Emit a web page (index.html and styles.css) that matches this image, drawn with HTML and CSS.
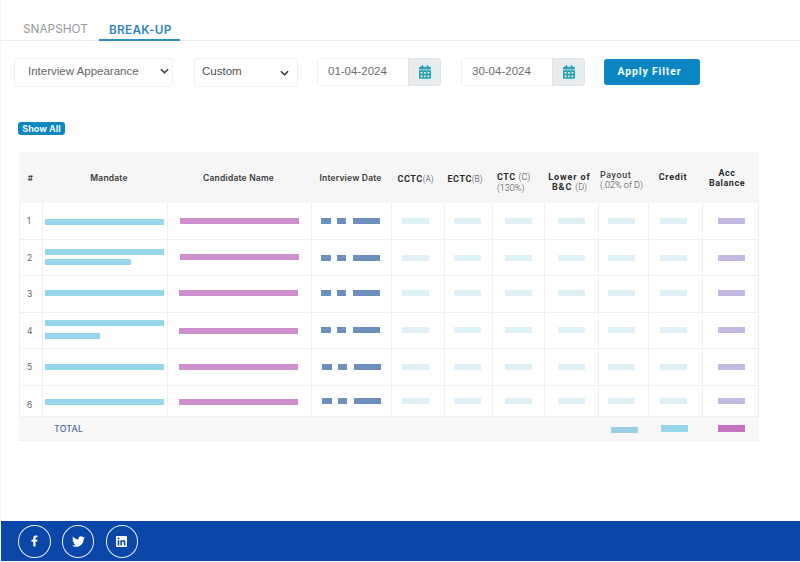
FILE: index.html
```html
<!DOCTYPE html>
<html lang="en">
<head>
<meta charset="utf-8">
<title>Break-up</title>
<link rel="stylesheet" href="styles.css">
</head>
<body>
<div class="page">
  <nav class="tabs">
    <span class="tab">SNAPSHOT</span>
    <span class="tab active">BREAK-UP</span>
  </nav>
  <div class="filters">
    <div class="select sel-type"><span>Interview Appearance</span><svg class="chev" viewBox="0 0 10 6"><path d="M1 1l4 4 4-4" fill="none" stroke="#333" stroke-width="1.6"/></svg></div>
    <div class="select sel-range"><span>Custom</span><svg class="chev" viewBox="0 0 10 6"><path d="M1 1l4 4 4-4" fill="none" stroke="#333" stroke-width="1.6"/></svg></div>
    <div class="date"><span class="date-val">01-04-2024</span><span class="addon"><svg class="cal" viewBox="0 0 448 512"><path d="M0 464c0 26.5 21.5 48 48 48h352c26.5 0 48-21.5 48-48V192H0v272zm320-196c0-6.6 5.4-12 12-12h40c6.6 0 12 5.4 12 12v40c0 6.6-5.4 12-12 12h-40c-6.6 0-12-5.4-12-12v-40zm0 128c0-6.6 5.4-12 12-12h40c6.6 0 12 5.4 12 12v40c0 6.6-5.4 12-12 12h-40c-6.6 0-12-5.4-12-12v-40zM192 268c0-6.6 5.4-12 12-12h40c6.6 0 12 5.4 12 12v40c0 6.6-5.4 12-12 12h-40c-6.6 0-12-5.4-12-12v-40zm0 128c0-6.6 5.4-12 12-12h40c6.6 0 12 5.4 12 12v40c0 6.6-5.4 12-12 12h-40c-6.6 0-12-5.4-12-12v-40zM64 268c0-6.6 5.4-12 12-12h40c6.6 0 12 5.4 12 12v40c0 6.6-5.4 12-12 12H76c-6.6 0-12-5.4-12-12v-40zm0 128c0-6.6 5.4-12 12-12h40c6.6 0 12 5.4 12 12v40c0 6.6-5.4 12-12 12H76c-6.6 0-12-5.4-12-12v-40zM400 64h-48V16c0-8.8-7.2-16-16-16h-32c-8.8 0-16 7.2-16 16v48H160V16c0-8.8-7.2-16-16-16h-32c-8.8 0-16 7.2-16 16v48H48C21.5 64 0 85.5 0 112v48h448v-48c0-26.5-21.5-48-48-48z"/></svg></span></div>
    <div class="date"><span class="date-val">30-04-2024</span><span class="addon"><svg class="cal" viewBox="0 0 448 512"><path d="M0 464c0 26.5 21.5 48 48 48h352c26.5 0 48-21.5 48-48V192H0v272zm320-196c0-6.6 5.4-12 12-12h40c6.6 0 12 5.4 12 12v40c0 6.6-5.4 12-12 12h-40c-6.6 0-12-5.4-12-12v-40zm0 128c0-6.6 5.4-12 12-12h40c6.6 0 12 5.4 12 12v40c0 6.6-5.4 12-12 12h-40c-6.6 0-12-5.4-12-12v-40zM192 268c0-6.6 5.4-12 12-12h40c6.6 0 12 5.4 12 12v40c0 6.6-5.4 12-12 12h-40c-6.6 0-12-5.4-12-12v-40zm0 128c0-6.6 5.4-12 12-12h40c6.6 0 12 5.4 12 12v40c0 6.6-5.4 12-12 12h-40c-6.6 0-12-5.4-12-12v-40zM64 268c0-6.6 5.4-12 12-12h40c6.6 0 12 5.4 12 12v40c0 6.6-5.4 12-12 12H76c-6.6 0-12-5.4-12-12v-40zm0 128c0-6.6 5.4-12 12-12h40c6.6 0 12 5.4 12 12v40c0 6.6-5.4 12-12 12H76c-6.6 0-12-5.4-12-12v-40zM400 64h-48V16c0-8.8-7.2-16-16-16h-32c-8.8 0-16 7.2-16 16v48H160V16c0-8.8-7.2-16-16-16h-32c-8.8 0-16 7.2-16 16v48H48C21.5 64 0 85.5 0 112v48h448v-48c0-26.5-21.5-48-48-48z"/></svg></span></div>
    <button class="apply">Apply Filter</button>
  </div>
  <div class="show-row"><span class="show-all">Show All</span></div>
  <table class="grid">
    <thead>
      <tr>
        <th class="h-m c-num">#</th>
        <th class="h-m c-mandate">Mandate</th>
        <th class="h-m c-cand">Candidate Name</th>
        <th class="h-m c-date">Interview Date</th>
        <th class="c-a">CCTC<i>(A)</i></th>
        <th class="c-b">ECTC<i>(B)</i></th>
        <th class="c-c h-left"><span class="ln">CTC <i>(C)</i></span><span class="ln"><i>(130%)</i></span></th>
        <th class="c-d"><span class="ln">Lower of</span><span class="ln">B&amp;C <i>(D)</i></span></th>
        <th class="c-e h-left"><span class="ln pay">Payout</span><span class="ln"><i>(.02% of D)</i></span></th>
        <th class="c-f">Credit</th>
        <th class="c-g"><span class="ln">Acc</span><span class="ln">Balance</span></th>
      </tr>
    </thead>
    <tbody>
      <tr class="r1">
        <td class="num">1</td>
        <td class="mandate"><span class="bar m-full"></span></td>
        <td class="cand"><span class="bar pink"></span></td>
        <td class="dt"><span class="d1"></span><span class="d2"></span><span class="d3"></span></td>
        <td><span class="bar pale"></span></td><td><span class="bar pale"></span></td><td><span class="bar pale"></span></td><td><span class="bar pale"></span></td><td><span class="bar pale"></span></td><td><span class="bar pale"></span></td><td><span class="bar lilac"></span></td>
      </tr>
      <tr class="r2">
        <td class="num">2</td>
        <td class="mandate"><span class="bar m-full"></span><span class="bar m-mid"></span></td>
        <td class="cand"><span class="bar pink"></span></td>
        <td class="dt"><span class="d1"></span><span class="d2"></span><span class="d3"></span></td>
        <td><span class="bar pale"></span></td><td><span class="bar pale"></span></td><td><span class="bar pale"></span></td><td><span class="bar pale"></span></td><td><span class="bar pale"></span></td><td><span class="bar pale"></span></td><td><span class="bar lilac"></span></td>
      </tr>
      <tr class="r3">
        <td class="num">3</td>
        <td class="mandate"><span class="bar m-full"></span></td>
        <td class="cand"><span class="bar pink"></span></td>
        <td class="dt"><span class="d1"></span><span class="d2"></span><span class="d3"></span></td>
        <td><span class="bar pale"></span></td><td><span class="bar pale"></span></td><td><span class="bar pale"></span></td><td><span class="bar pale"></span></td><td><span class="bar pale"></span></td><td><span class="bar pale"></span></td><td><span class="bar lilac"></span></td>
      </tr>
      <tr class="r4">
        <td class="num">4</td>
        <td class="mandate"><span class="bar m-full"></span><span class="bar m-short"></span></td>
        <td class="cand"><span class="bar pink"></span></td>
        <td class="dt"><span class="d1"></span><span class="d2"></span><span class="d3"></span></td>
        <td><span class="bar pale"></span></td><td><span class="bar pale"></span></td><td><span class="bar pale"></span></td><td><span class="bar pale"></span></td><td><span class="bar pale"></span></td><td><span class="bar pale"></span></td><td><span class="bar lilac"></span></td>
      </tr>
      <tr class="r5">
        <td class="num">5</td>
        <td class="mandate"><span class="bar m-full"></span></td>
        <td class="cand"><span class="bar pink"></span></td>
        <td class="dt"><span class="d1"></span><span class="d2"></span><span class="d3"></span></td>
        <td><span class="bar pale"></span></td><td><span class="bar pale"></span></td><td><span class="bar pale"></span></td><td><span class="bar pale"></span></td><td><span class="bar pale"></span></td><td><span class="bar pale"></span></td><td><span class="bar lilac"></span></td>
      </tr>
      <tr class="r6">
        <td class="num">6</td>
        <td class="mandate"><span class="bar m-full"></span></td>
        <td class="cand"><span class="bar pink"></span></td>
        <td class="dt"><span class="d1"></span><span class="d2"></span><span class="d3"></span></td>
        <td><span class="bar pale"></span></td><td><span class="bar pale"></span></td><td><span class="bar pale"></span></td><td><span class="bar pale"></span></td><td><span class="bar pale"></span></td><td><span class="bar pale"></span></td><td><span class="bar lilac"></span></td>
      </tr>
    </tbody>
    <tfoot>
      <tr>
        <td class="total" colspan="8">TOTAL</td>
        <td><span class="bar tot-pay"></span></td>
        <td><span class="bar tot-credit"></span></td>
        <td><span class="bar tot-acc"></span></td>
      </tr>
    </tfoot>
  </table>
  <footer class="foot">
    <a class="social"><svg class="ic-f" viewBox="0 0 320 512"><path d="M279.14 288l14.22-92.66h-88.91v-60.13c0-25.35 12.42-50.06 52.24-50.06h40.42V6.26S260.43 0 225.36 0c-73.22 0-121.08 44.38-121.08 124.72v70.62H22.89V288h81.39v224h100.17V288z"/></svg></a>
    <a class="social"><svg class="ic-t" viewBox="0 0 512 512"><path d="M459.37 151.716c.325 4.548.325 9.097.325 13.645 0 138.72-105.583 298.558-298.558 298.558-59.452 0-114.68-17.219-161.137-47.106 8.447.974 16.568 1.299 25.34 1.299 49.055 0 94.213-16.568 130.274-44.832-46.132-.975-84.792-31.188-98.112-72.772 6.498.974 12.995 1.624 19.818 1.624 9.421 0 18.843-1.3 27.614-3.573-48.081-9.747-84.143-51.98-84.143-102.985v-1.299c13.969 7.797 30.214 12.67 47.431 13.319-28.264-18.843-46.781-51.005-46.781-87.391 0-19.492 5.197-37.36 14.294-52.954 51.655 63.675 129.3 105.258 216.365 109.807-1.624-7.797-2.599-15.918-2.599-24.04 0-57.828 46.782-104.934 104.934-104.934 30.213 0 57.502 12.67 76.67 33.137 23.715-4.548 46.456-13.32 66.599-25.34-7.798 24.366-24.366 44.833-46.132 57.827 21.117-2.273 41.584-8.122 60.426-16.243-14.292 20.791-32.161 39.308-52.628 54.253z"/></svg></a>
    <a class="social"><svg class="ic-l" viewBox="0 0 448 512"><path d="M416 32H31.9C14.3 32 0 46.5 0 64.3v383.4C0 465.5 14.3 480 31.9 480H416c17.6 0 32-14.5 32-32.3V64.3c0-17.8-14.4-32.3-32-32.3zM135.4 416H69V202.2h66.5V416zm-33.2-243c-21.3 0-38.5-17.3-38.5-38.5S80.9 96 102.2 96c21.2 0 38.5 17.3 38.5 38.5 0 21.3-17.2 38.5-38.5 38.5zm282.1 243h-66.4V312c0-24.8-.5-56.7-34.5-56.7-34.6 0-39.9 27-39.9 54.9V416h-66.4V202.2h63.7v29.2h.9c8.9-16.8 30.6-34.5 62.9-34.5 67.2 0 79.7 44.3 79.7 101.9V416z"/></svg></a>
  </footer>
</div>
</body>
</html>
```

FILE: styles.css
```css
* { box-sizing: border-box; }
html, body { margin: 0; padding: 0; background: #fff; }
body { font-family: "Liberation Sans", Arial, sans-serif; }

.page {
  width: 800px;
  height: 561px;
  display: flex;
  flex-direction: column;
  border-left: 1px solid #f4f4f4;
}

/* tabs */
.tabs {
  height: 41px;
  display: flex;
  align-items: flex-end;
  padding-left: 21px;
  gap: 11px;
  border-bottom: 1px solid #ececec;
  flex: none;
}
.tab {
  font-family: Inter, sans-serif;
  font-size: 11.8px;
  line-height: 14px;
  color: #9a9a9a;
  height: 20px;
  padding-top: 2px;
  margin-left: 1px;
}
.tab.active {
  width: 81px;
  margin-left: 0;
  padding-left: 2px;
  text-align: center;
  color: #2a86bd;
  font-weight: 600;
  font-size: 11.8px;
  letter-spacing: .3px;
  border-bottom: 2px solid #2a8fc4;
  height: 20px;
  margin-bottom: -1px;
}

/* filters */
.filters {
  display: flex;
  align-items: flex-start;
  padding: 17px 0 0 13px;
  height: 81px;
  flex: none;
}
.select {
  height: 29px;
  border: 1px solid #f0f0f0;
  border-radius: 3px;
  display: flex;
  align-items: center;
  justify-content: space-between;
  font-size: 11.5px;
  color: #4e4e4e;
}
.sel-type { width: 159px; padding: 0 3px 4px 13px; margin-right: 21px; color: #666; }
.sel-range { width: 104px; padding: 0 8px 3px 7px; margin-right: 19px; }
.sel-range .chev { margin-top: 3px; }
.chev { width: 9px; height: 6px; display: block; }
.date {
  width: 124px;
  height: 28px;
  border: 1px solid #f0f0f0;
  border-radius: 3px;
  display: flex;
  margin-right: 20px;
}
.date-val {
  flex: 1;
  font-size: 11.5px;
  line-height: 24px;
  padding-left: 10px;
  color: #6c6c6c;
}
.addon {
  width: 33px;
  background: #e9ecef;
  border-radius: 0 3px 3px 0;
  display: flex;
  align-items: center;
  justify-content: center;
  margin: -1px -1px -1px 0;
  border: 1px solid #e2e5e8;
}
.cal { width: 12px; height: 14px; fill: #2aa3b3; display: block; }
.apply {
  width: 96px;
  height: 26px;
  margin: 1px 0 0 -1px;
  border: 0;
  border-radius: 3px;
  background: #0a87c2;
  color: #f2fafd;
  font-family: Roboto, sans-serif;
  font-size: 10.5px;
  font-weight: 700;
  letter-spacing: .85px;
  padding: 0 5px 2px 0;
}

/* show all */
.show-row { height: 30px; padding-left: 17px; flex: none; }
.show-all {
  display: block;
  width: 47px;
  height: 13px;
  border-radius: 3px;
  background: #0a87c2;
  color: #eef8fc;
  font-family: Inter, sans-serif;
  font-size: 9px;
  font-weight: 700;
  line-height: 13px;
  text-align: center;
}

/* table */
.grid {
  margin-left: 18px;
  width: 739px;
  table-layout: fixed;
  border-collapse: collapse;
  flex: none;
}
.grid th, .grid td {
  border: 1px solid #efefef;
  padding: 0;
  vertical-align: middle;
}
.grid thead tr { height: 50px; }
.grid th {
  background: #f6f6f6;
  border-color: #f6f6f6;
  font-family: Roboto, sans-serif;
  font-size: 9px;
  font-weight: 700;
  line-height: 10px;
  color: #2c2c2c;
  letter-spacing: .55px;
  text-align: center;
}
.grid th i {
  font-style: normal;
  font-weight: 300;
  letter-spacing: 0;
  color: #444;
}
.ln { display: block; white-space: nowrap; }
.grid th.h-m {
  font-family: Inter, sans-serif;
  font-size: 8.5px;
  font-weight: 600;
  letter-spacing: .2px;
  color: #3a3a3a;
}
.grid th.c-num { font-size: 8px; padding-right: 1px; }
.grid th.c-mandate { padding-left: 8px; }
.grid th.c-cand { padding-right: 2px; }
.grid th.c-date { padding-right: 2px; }
.grid th.h-left { text-align: left; }
.grid th.c-a { padding: 2px 5px 0 0; }
.grid th.c-b { padding: 2px 7px 0 0; }
.grid th.c-a i, .grid th.c-b i { font-size: 8.5px; }
.grid th.c-c { padding: 10px 0 0 4px; line-height: 10.5px; }
.grid th.c-d { padding: 8px 4px 0 0; letter-spacing: .9px; }
.grid th.c-d i { color: #555; }
.grid th.c-e { padding: 4px 0 0 1px; }
.grid th.c-f { padding: 0 5px 2px 0; letter-spacing: .7px; }
.grid th.c-g { padding: 0 7px 0 0; }
.pay { font-weight: 500; color: #444; }
.c-num { width: 23px; }
.c-mandate { width: 125px; }
.c-cand { width: 144px; }
.c-date { width: 80px; }
.c-a { width: 53px; }
.c-b { width: 48px; }
.c-c { width: 52px; }
.c-d { width: 54px; }
.c-e { width: 50px; }
.c-f { width: 54px; }
.c-g { width: 56px; }

.r1 { height: 37px; }
.r2 { height: 36px; }
.r3 { height: 37px; }
.r4 { height: 36px; }
.r5 { height: 37px; }
.r6 { height: 31px; }

/* row-level nudges: the bars sit slightly off the row's centre line */
.grid .r1 .mandate { padding-top: 2px; }
.grid .r2 .mandate, .grid .r2 .cand { padding-bottom: 2px; }
.grid .r3 td:not(.num) { padding-bottom: 2px; }
.grid .r3 .cand { padding-bottom: 4px; }
.grid .r4 td:not(.num):not(.cand) { padding-bottom: 2px; }
.grid .r6 .mandate, .grid .r6 .cand { padding-top: 2px; }

.grid .num {
  font-family: Inter, sans-serif;
  font-size: 8.5px;
  color: #666;
  padding-left: 7px;
}
.grid .r6 .num { padding-top: 7px; }
.bar { display: block; height: 6px; width: 27px; }
.grid .mandate { padding-left: 2px; }
.m-full { width: 119px; height: 6px; background: #98d7ea; }
.m-mid { width: 86px; height: 6px; background: #98d7ea; margin-top: 4px; }
.m-short { width: 55px; height: 6px; background: #98d7ea; margin-top: 7px; }
.grid .cand { padding-left: 12px; }
.pink { width: 119px; background: #cd90cc; }
.r3 .pink, .r4 .pink, .r5 .pink, .r6 .pink { margin-left: -1px; }
.grid .dt { padding-left: 9px; font-size: 0; white-space: nowrap; }
.grid .r5 .dt, .grid .r6 .dt { padding-left: 10px; }
.dt span { display: inline-block; height: 6px; background: #6d8fbd; vertical-align: middle; }
.d1 { width: 10px; margin-right: 6px; }
.d2 { width: 9px; margin-right: 7px; }
.d3 { width: 27px; }

.pale { background: #dff1f7; }
.lilac { background: #c2b8e0; }
tbody td:nth-child(5) .bar { margin-left: 10px; }
tbody td:nth-child(6) .bar { margin-left: 9px; }
tbody td:nth-child(7) .bar { margin-left: 12px; }
tbody td:nth-child(8) .bar { margin-left: 13px; }
tbody td:nth-child(9) .bar { margin-left: 9px; }
tbody td:nth-child(10) .bar { margin-left: 11px; }
tbody td:nth-child(11) .bar { margin-left: 15px; }

.grid tfoot tr { height: 24px; }
.grid tfoot td { background: #f7f7f7; border-color: #f0f0f0; border-left-color: #f7f7f7; border-right-color: #f7f7f7; }
.grid td.total {
  padding-left: 34px;
  font-family: Inter, sans-serif;
  font-size: 8.8px;
  font-weight: 500;
  color: #4a6ea3;
  letter-spacing: .2px;
}
.tot-pay { margin-left: 12px; background: #9bd0e4; height: 6px; margin-top: 3px; }
.tot-credit { margin-left: 12px; background: #98d7ea; height: 7px; }
.tot-acc { margin-left: 15px; background: #c273c1; height: 7px; }

/* footer */
.foot {
  margin-top: auto;
  height: 40px;
  background: #0a47a9;
  display: flex;
  align-items: center;
  padding-left: 17px;
  gap: 11.25px;
  flex: none;
}
.social {
  width: 32.5px;
  height: 33px;
  border: 1.2px solid #e8eef8;
  border-radius: 50%;
  display: flex;
  align-items: center;
  justify-content: center;
}
.social svg { fill: #fff; display: block; }
.ic-f { width: 7px; height: 12px; }
.ic-t { width: 13px; height: 13px; }
.ic-l { width: 11px; height: 13px; }
```
